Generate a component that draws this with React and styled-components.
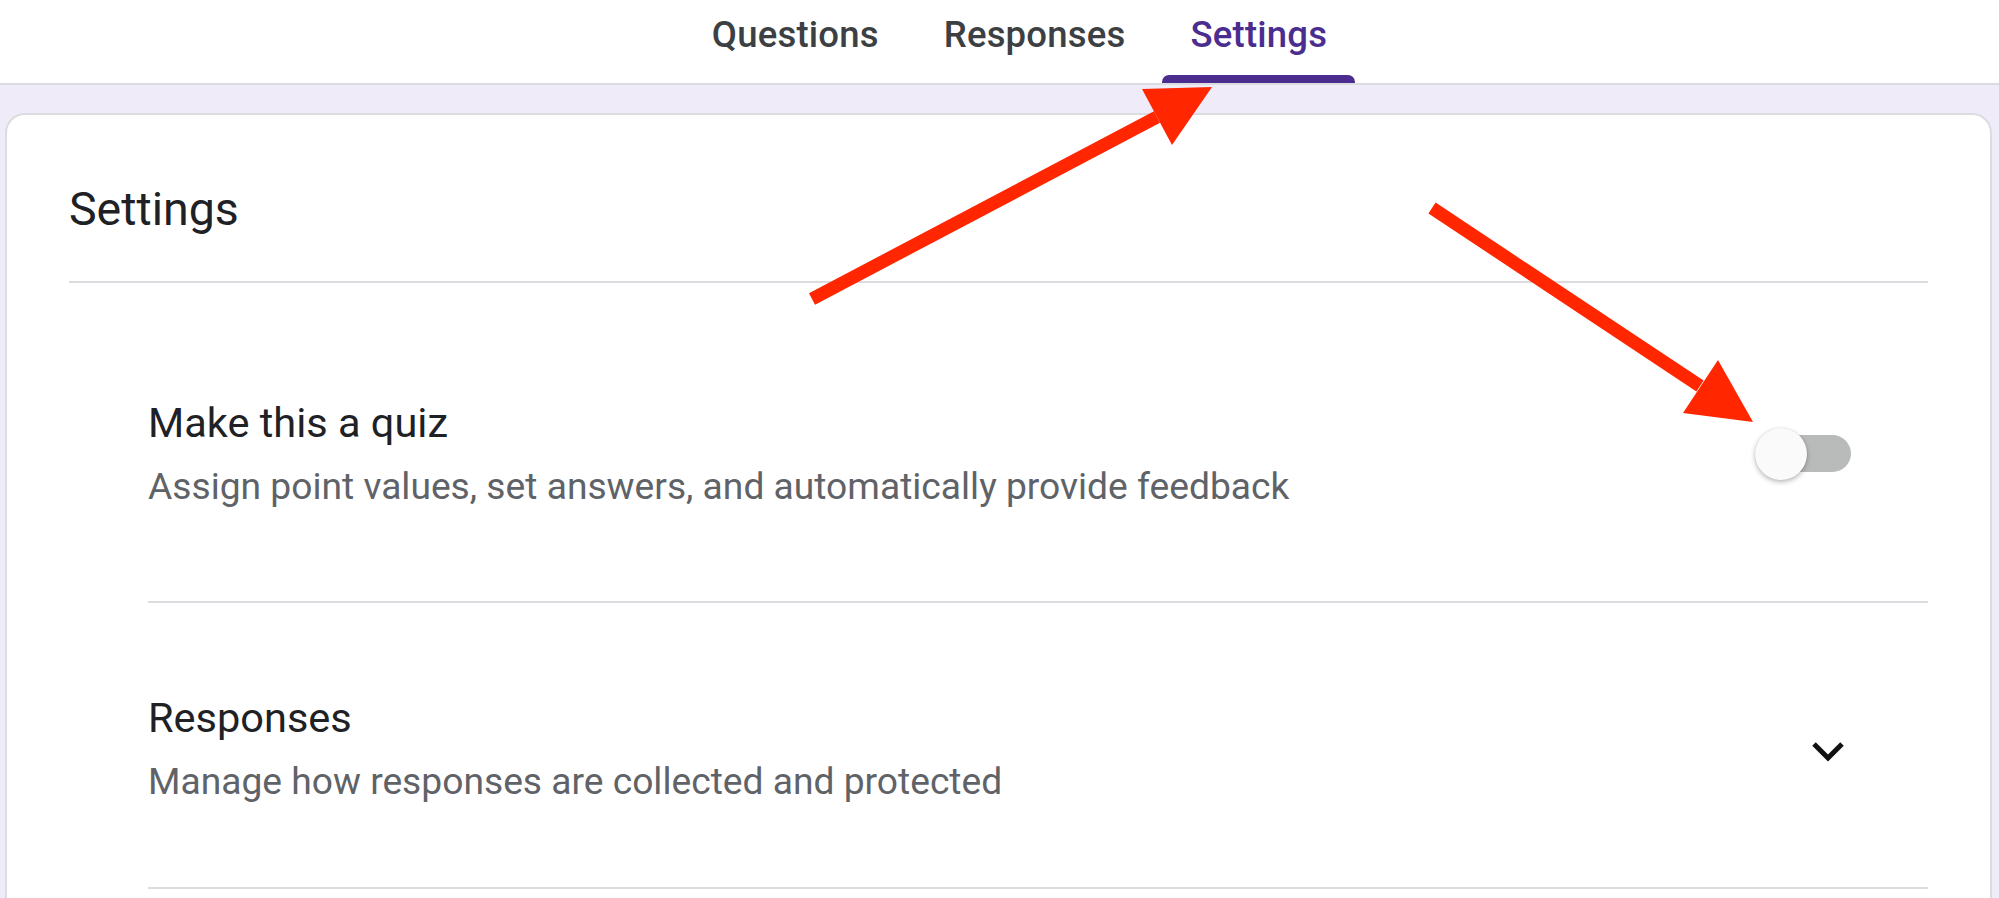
import styled, { createGlobalStyle } from 'styled-components';

const GlobalStyle = createGlobalStyle`
  html, body {
    margin: 0;
    padding: 0;
    background: #ffffff;
    font-family: Roboto, "Liberation Sans", Arial, sans-serif;
    overflow: hidden;
  }
`;

const Page = styled.div`
  position: relative;
  display: flex;
  flex-direction: column;
  width: 1999px;
  height: 898px;
  overflow: hidden;
`;

const Header = styled.div`
  display: flex;
  justify-content: center;
  gap: 9px;
  height: 83px;
  padding-left: 40px;
  background: #ffffff;
`;

const Tab = styled.div`
  display: flex;
  flex-direction: column;
  align-items: center;
  height: 83px;
  padding: 0 28px;
  box-sizing: border-box;
`;

const TabLabel = styled.span`
  padding-top: 14px;
  font-size: 36.5px;
  font-weight: 500;
  letter-spacing: 0.2px;
  line-height: 42px;
  color: ${(p) => (p.active ? '#4b2d8f' : '#3c4043')};
`;

const TabLine = styled.div`
  margin-top: auto;
  align-self: stretch;
  margin-left: -28px;
  margin-right: -28px;
  height: 8px;
  border-radius: 7px 7px 0 0;
  background: ${(p) => (p.active ? '#4b2d8f' : 'transparent')};
`;

const Band = styled.div`
  flex: 1;
  display: flex;
  padding: 28px 7px 0 5px;
  background: #f0ebf8;
  border-top: 2px solid #dadce0;
`;

const Card = styled.div`
  flex: 1;
  background: #ffffff;
  border: 2px solid #dadce0;
  border-bottom: none;
  border-radius: 20px 20px 0 0;
`;

const CardHead = styled.div`
  margin: 0 62px;
  padding: 66px 0 44px;
  border-bottom: 2px solid #dadce0;
`;

const Heading = styled.h2`
  margin: 0;
  font-size: 46.5px;
  font-weight: 400;
  line-height: 56px;
  color: #202124;
`;

const Sections = styled.div`
  padding: 0 62px 0 141px;
`;

const Row = styled.div`
  display: flex;
  align-items: center;
  justify-content: space-between;
  padding: ${(p) => p.pad};
  border-bottom: 2px solid #dadce0;
`;

const RowText = styled.div`
  display: flex;
  flex-direction: column;
  gap: 14px;
`;

const RowTitle = styled.div`
  font-size: 41.5px;
  line-height: 52px;
  color: #202124;
`;

const RowSub = styled.div`
  font-size: 37.2px;
  line-height: 46px;
  color: #5f6368;
`;

const Switch = styled.div`
  position: relative;
  width: 96px;
  height: 52px;
  margin-right: 77px;
  margin-top: 2px;
`;

const Track = styled.div`
  position: absolute;
  left: 2px;
  right: 0;
  top: 7px;
  height: 37px;
  border-radius: 19px;
  background: #b9baba;
`;

const Thumb = styled.div`
  position: absolute;
  left: 0;
  top: 0;
  width: 52px;
  height: 52px;
  border-radius: 50%;
  background: #fafafa;
  box-shadow: 0 2px 5px rgba(0, 0, 0, 0.28), 0 0 1px rgba(0, 0, 0, 0.15);
`;

const Chevron = styled.svg`
  width: 34px;
  height: 22px;
  margin-right: 83px;
  margin-top: 8px;
`;

const Overlay = styled.svg`
  position: absolute;
  left: 0;
  top: 0;
  width: 1999px;
  height: 898px;
  pointer-events: none;
`;

const arrows = [
  { tail: [812, 299], base: [1157, 117], head: '1212,87 1142,89 1172,145' },
  { tail: [1432, 208], base: [1700, 386], head: '1753,422 1718,360 1683,413' },
];

export default function App() {
  return (
    <Page>
      <GlobalStyle />
      <Header>
        <Tab>
          <TabLabel>Questions</TabLabel>
          <TabLine />
        </Tab>
        <Tab>
          <TabLabel>Responses</TabLabel>
          <TabLine />
        </Tab>
        <Tab>
          <TabLabel active>Settings</TabLabel>
          <TabLine active />
        </Tab>
      </Header>
      <Band>
        <Card>
          <CardHead>
            <Heading>Settings</Heading>
          </CardHead>
          <Sections>
            <Row pad="114px 0 92px">
              <RowText>
                <RowTitle>Make this a quiz</RowTitle>
                <RowSub>Assign point values, set answers, and automatically provide feedback</RowSub>
              </RowText>
              <Switch>
                <Track />
                <Thumb />
              </Switch>
            </Row>
            <Row pad="89px 0 83px">
              <RowText>
                <RowTitle>Responses</RowTitle>
                <RowSub>Manage how responses are collected and protected</RowSub>
              </RowText>
              <Chevron viewBox="0 0 34 22">
                <path d="M3 3 L17 17 L31 3" fill="none" stroke="#111" strokeWidth="5" />
              </Chevron>
            </Row>
          </Sections>
        </Card>
      </Band>
      <Overlay viewBox="0 0 1999 898">
        {arrows.map((a, i) => (
          <g key={i} fill="#ff2600" stroke="none">
            <line
              x1={a.tail[0]}
              y1={a.tail[1]}
              x2={a.base[0]}
              y2={a.base[1]}
              stroke="#ff2600"
              strokeWidth="13"
            />
            <polygon points={a.head} />
          </g>
        ))}
      </Overlay>
    </Page>
  );
}
